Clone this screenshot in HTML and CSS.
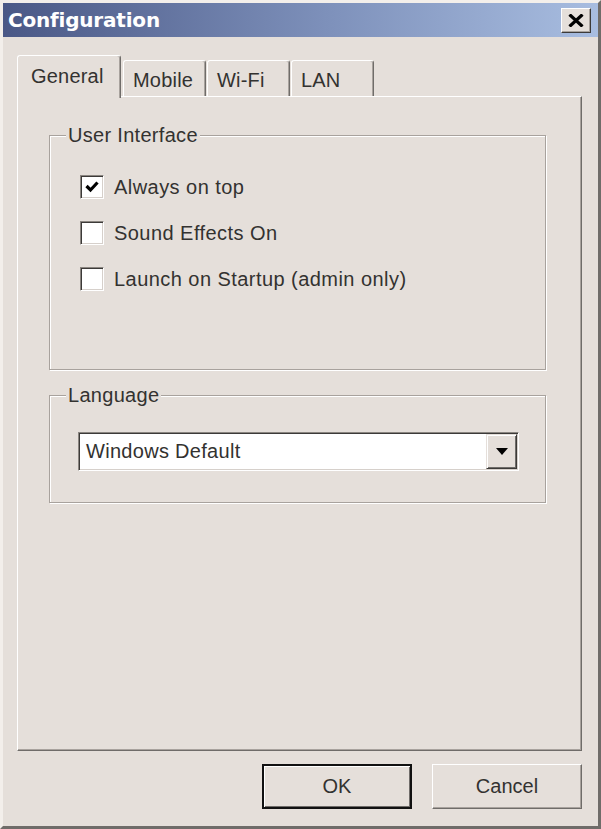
FILE: index.html
```html
<!DOCTYPE html>
<html lang="en">
<head>
    <meta charset="UTF-8">
    <title>Configuration</title>
    <link rel="stylesheet" href="styles.css">
</head>
<body>
    <div class="window">
        <div class="titlebar">
            <span class="title">Configuration</span>
            <button class="close" aria-label="Close">
                <svg width="16" height="13" viewBox="0 0 16 13">
                    <path d="M1.5 0.5 L14.5 12.5 M14.5 0.5 L1.5 12.5" stroke="#000" stroke-width="3.2"/>
                </svg>
            </button>
        </div>

        <div class="content">
            <div class="tabs">
                <div class="tab active">General</div>
                <div class="tab">Mobile</div>
                <div class="tab">Wi-Fi</div>
                <div class="tab">LAN</div>
            </div>

            <div class="panel">
                <fieldset class="group">
                    <legend>User Interface</legend>
                    <div class="group-body checks">
                        <label class="check">
                            <span class="box">
                                <svg width="16" height="16" viewBox="0 0 16 16">
                                    <path d="M2.5 7 L6.5 11 L13.5 3.5" fill="none" stroke="#000" stroke-width="3.2"/>
                                </svg>
                            </span>
                            Always on top
                        </label>
                        <label class="check"><span class="box"></span>Sound Effects On</label>
                        <label class="check"><span class="box"></span>Launch on Startup (admin only)</label>
                    </div>
                </fieldset>

                <fieldset class="group lang">
                    <legend>Language</legend>
                    <div class="group-body">
                        <div class="select">
                            <span class="value">Windows Default</span>
                            <span class="drop"><span class="arrow"></span></span>
                        </div>
                    </div>
                </fieldset>
            </div>

            <div class="buttons">
                <button class="btn default">OK</button>
                <button class="btn">Cancel</button>
            </div>
        </div>
    </div>
</body>
</html>
```

FILE: styles.css
```css
:root {
    --face: #e5dfda;
    --light: #ffffff;
    --shadow: #a8a29d;
    --dark: #6f6c69;
    --darkest: #3c3a38;
    --text: #333230;
}

* {
    box-sizing: border-box;
}

body {
    margin: 0;
    background: var(--face);
    font-family: "Liberation Sans", Arial, sans-serif;
    font-size: 20px;
    color: var(--text);
}

.window {
    width: 601px;
    height: 829px;
    display: flex;
    flex-direction: column;
    background: var(--face);
    border: 3px solid;
    border-color: #f3efeb var(--dark) var(--dark) #f3efeb;
}

.titlebar {
    height: 34px;
    flex-shrink: 0;
    display: flex;
    align-items: center;
    justify-content: space-between;
    padding: 0 7px 0 5px;
    background: linear-gradient(to right, #4a5886, #7e91bb 55%, #a8bde0);
}

.title {
    font-family: "DejaVu Sans", Verdana, sans-serif;
    font-weight: bold;
    font-size: 20px;
    color: #fff;
    letter-spacing: -0.2px;
}

.close {
    width: 30px;
    height: 25px;
    padding: 0;
    display: flex;
    align-items: center;
    justify-content: center;
    background: var(--face);
    border: 1px solid;
    border-color: var(--light) var(--darkest) var(--darkest) var(--light);
    box-shadow: inset -1px -1px 0 var(--shadow);
}

.content {
    flex: 1;
    display: flex;
    flex-direction: column;
    padding: 18px 16px 17px 14px;
}

.tabs {
    height: 41px;
    flex-shrink: 0;
    display: flex;
    align-items: flex-end;
    gap: 1px;
    position: relative;
    z-index: 1;
}

.tab {
    height: 36px;
    min-width: 83px;
    padding: 7px 10px 0 9px;
    line-height: 24px;
    letter-spacing: 0.2px;
    border: 1px solid;
    border-bottom: none;
    border-color: var(--light) var(--dark) transparent var(--light);
    border-radius: 3px 3px 0 0;
    box-shadow: inset -1px 0 0 var(--shadow);
    background: var(--face);
}

.tab.active {
    height: 43px;
    width: 104px;
    padding-left: 13px;
    padding-top: 8px;
    margin-bottom: -2px;
    margin-right: 1px;
}

.panel {
    flex: 1;
    padding: 27px 35px 0 31px;
    border: 1px solid;
    border-color: var(--light) var(--dark) var(--dark) var(--light);
    box-shadow: inset -1px -1px 0 var(--shadow);
}

.group {
    margin: 0;
    min-width: 0;
    padding: 0 26px 0 16px;
    border: 1px solid var(--shadow);
    box-shadow: inset 1px 1px 0 var(--light), 1px 1px 0 var(--light);
}

.group legend {
    padding: 0 2px;
    line-height: 22px;
    letter-spacing: 0.3px;
    background: var(--face);
}

.group-body.checks {
    display: flex;
    flex-direction: column;
    gap: 22px;
    padding: 29px 0 78px 14px;
}

.check {
    height: 24px;
    display: flex;
    align-items: center;
    gap: 10px;
    letter-spacing: 0.45px;
    line-height: 24px;
}

.box {
    width: 24px;
    height: 24px;
    display: flex;
    align-items: center;
    justify-content: center;
    background: #fff;
    border: 1px solid;
    border-color: #8a8580 var(--light) var(--light) #8a8580;
    box-shadow: inset 1px 1px 0 var(--darkest), inset -1px -1px 0 #d6d0cb;
}

.lang {
    margin-top: 14px;
}

.lang .group-body {
    padding: 26px 0 31px 12px;
}

.select {
    height: 39px;
    display: flex;
    align-items: stretch;
    background: #fff;
    border: 1px solid;
    border-color: #8a8580 var(--light) var(--light) #8a8580;
    box-shadow: inset 1px 1px 0 var(--darkest), inset -1px -1px 0 #d6d0cb;
    padding: 1px;
}

.select .value {
    flex: 1;
    padding-left: 6px;
    display: flex;
    align-items: center;
    letter-spacing: 0.3px;
}

.drop {
    width: 31px;
    display: flex;
    align-items: center;
    justify-content: center;
    background: var(--face);
    border: 1px solid;
    border-color: var(--face) var(--darkest) var(--darkest) var(--face);
    box-shadow: inset 1px 1px 0 var(--light), inset -1px -1px 0 var(--dark);
}

.arrow {
    width: 0;
    height: 0;
    border-top: 7px solid #000;
    border-left: 6px solid transparent;
    border-right: 6px solid transparent;
}

.buttons {
    display: flex;
    justify-content: flex-end;
    gap: 20px;
    margin-top: 13px;
}

.btn {
    width: 150px;
    height: 45px;
    padding: 0;
    font-family: inherit;
    font-size: 20px;
    color: var(--text);
    background: var(--face);
    border: 1px solid;
    border-color: var(--light) var(--dark) var(--dark) var(--light);
    box-shadow: inset -1px -1px 0 var(--shadow);
}

.btn.default {
    border: 2px solid #111;
    box-shadow: inset 1px 1px 0 var(--light), inset -1px -1px 0 var(--dark);
}
```
